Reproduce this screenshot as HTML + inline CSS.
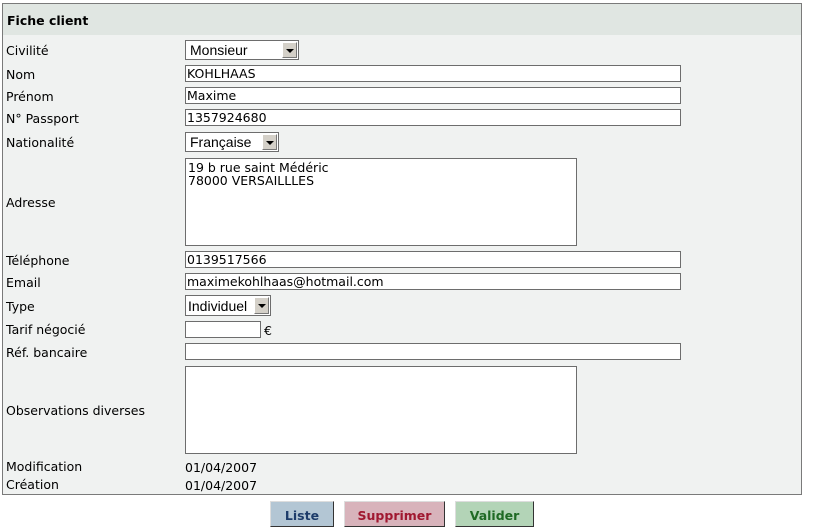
<!DOCTYPE html>
<html><head><meta charset="utf-8"><style>
body{margin:0;width:813px;height:528px;background:#fff;font-family:"DejaVu Sans","Liberation Sans",sans-serif;font-size:12.5px;color:#000;position:relative;overflow:hidden}
.a{position:absolute}
#box{left:2px;top:3px;width:798px;height:490px;border:1px solid #7a7a7a;background:#f0f2f1}
#hd{left:3px;top:4px;width:798px;height:31px;background:#e0e6e2;font-weight:bold;font-size:12.5px;line-height:34px;padding-left:4px;box-sizing:border-box}
.l{left:6px;line-height:14px}
.i{left:185px;height:17px;border:1px solid #6d6d6d;background:#fff;box-sizing:border-box;line-height:16px;padding-left:1px;font-size:12.5px}
.s{left:185px;border:1px solid #6d6d6d;background:#fff;box-sizing:border-box;padding-left:4px;font-family:"Liberation Sans",sans-serif;font-size:14px}
.s b{position:absolute;right:1px;top:1px;width:15px;bottom:1px;background:#d4d0c8;border:1px solid;border-color:#fff #777 #777 #fff;box-sizing:border-box}
.s b:after{content:"";position:absolute;left:3px;top:6px;border:4px solid transparent;border-top:4px solid #000;border-bottom:0}
.t{left:185px;width:392px;height:88px;border:1px solid #6d6d6d;background:#fff;box-sizing:border-box;padding:2px 2px;line-height:13px}
.btn{top:501px;height:26px;font-weight:bold;text-align:center;line-height:27px;box-sizing:border-box;border:1px solid;border-color:#ddd #333 #333 #ddd;font-size:12.5px}
</style></head><body>
<div class="a" id="box"></div>
<div class="a" id="hd">Fiche client</div>
<div class="a l" style="top:44px">Civilité</div>
<div class="a s" style="top:40px;width:114px;height:20px;line-height:19px">Monsieur<b></b></div>
<div class="a l" style="top:68px">Nom</div>
<div class="a i" style="top:65px;width:496px">KOHLHAAS</div>
<div class="a l" style="top:90px">Prénom</div>
<div class="a i" style="top:87px;width:496px">Maxime</div>
<div class="a l" style="top:112px">N° Passport</div>
<div class="a i" style="top:109px;width:496px">1357924680</div>
<div class="a l" style="top:136px">Nationalité</div>
<div class="a s" style="top:132px;width:94px;height:20px;line-height:19px">Française<b></b></div>
<div class="a l" style="top:196px">Adresse</div>
<div class="a t" style="top:158px">19 b rue saint Médéric<br>78000 VERSAILLLES</div>
<div class="a l" style="top:254px">Téléphone</div>
<div class="a i" style="top:251px;width:496px">0139517566</div>
<div class="a l" style="top:276px">Email</div>
<div class="a i" style="top:273px;width:496px">maximekohlhaas@hotmail.com</div>
<div class="a l" style="top:300px">Type</div>
<div class="a s" style="top:295px;width:86px;height:21px;line-height:20px;padding-left:2px">Individuel<b></b></div>
<div class="a l" style="top:323px">Tarif négocié</div>
<div class="a i" style="top:321px;width:76px"></div>
<div class="a" style="left:264px;top:323px">€</div>
<div class="a l" style="top:346px">Réf. bancaire</div>
<div class="a i" style="top:343px;width:496px"></div>
<div class="a l" style="top:404px">Observations diverses</div>
<div class="a t" style="top:366px"></div>
<div class="a l" style="top:460px">Modification</div>
<div class="a" style="left:185px;top:460px">01/04/2007</div>
<div class="a l" style="top:478px">Création</div>
<div class="a" style="left:185px;top:478px">01/04/2007</div>
<div class="a btn" style="left:270px;width:64px;background:#b3c6d4;color:#1d3c6a">Liste</div>
<div class="a btn" style="left:344px;width:101px;background:#d8b3bb;color:#a01830">Supprimer</div>
<div class="a btn" style="left:455px;width:79px;background:#b3d4b7;color:#1f6a24">Valider</div>
</body></html>
